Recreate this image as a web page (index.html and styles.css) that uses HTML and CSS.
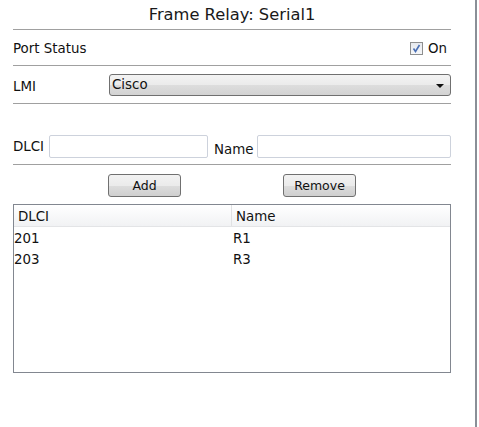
FILE: index.html
```html
<!DOCTYPE html>
<html>
<head>
<meta charset="utf-8">
<link rel="stylesheet" href="styles.css">
</head>
<body>
<div class="panel">
  <div class="title">Frame Relay: Serial1</div>
  <div class="row status-row">
    <span class="label">Port Status</span>
    <span class="check-wrap">
      <span class="checkbox"><svg width="11" height="11" viewBox="0 0 11 11"><path d="M2.5 5.5 L4.5 8.5 L8.5 2" fill="none" stroke="#4a6fb5" stroke-width="1.6"/></svg></span>
      <span class="on">On</span>
    </span>
  </div>
  <div class="row lmi-row">
    <span class="label lmi-label">LMI</span>
    <div class="select"><span>Cisco</span><span class="arrow"></span></div>
  </div>
  <div class="inputs-row">
    <span class="label dlci-label">DLCI</span>
    <span class="input dlci-input"></span>
    <span class="label name-label">Name</span>
    <span class="input name-input"></span>
  </div>
  <div class="buttons">
    <span class="btn">Add</span>
    <span class="btn">Remove</span>
  </div>
  <div class="table">
    <div class="thead">
      <div class="th c1">DLCI</div>
      <div class="th c2">Name</div>
    </div>
    <div class="tr"><div class="td c1">201</div><div class="td c2">R1</div></div>
    <div class="tr"><div class="td c1">203</div><div class="td c2">R3</div></div>
  </div>
</div>
</body>
</html>
```
FILE: styles.css
```css
* { box-sizing: border-box; }
html, body { margin: 0; padding: 0; background: #fff; }
body {
  font-family: "DejaVu Sans", Verdana, sans-serif;
  font-size: 13.4px;
  color: #111;
}
.panel {
  width: 477px;
  height: 427px;
  border-right: 2px solid #8a8f97;
  padding: 0 24px 0 13px;
}
.title {
  height: 30px;
  line-height: 29px;
  font-size: 16.3px;
  text-align: center;
  border-bottom: 1px solid #a0a0a0;
  color: #1a1a1a;
}
.row {
  display: flex;
  align-items: center;
  border-bottom: 1px solid #a0a0a0;
}
.status-row {
  height: 36px;
  justify-content: space-between;
}
.label { line-height: 15px; }
.status-row .label { padding-top: 2px; }
.check-wrap {
  display: flex;
  align-items: center;
  gap: 5px;
  padding-right: 4px;
  padding-top: 1px;
}
.checkbox {
  width: 13px;
  height: 13px;
  border: 1px solid #8e8f8f;
  background: linear-gradient(#e6e9ee, #f6f7f9);
  display: flex;
  align-items: center;
  justify-content: center;
}
.checkbox svg { display: block; }
.lmi-row { height: 38px; }
.lmi-label { width: 96px; padding-top: 3px; }
.select {
  flex: 1;
  height: 22px;
  border: 1px solid #707070;
  border-radius: 3px;
  background: linear-gradient(#f3f3f3 0%, #ebebeb 50%, #dddddd 51%, #d3d3d3 100%);
  display: flex;
  align-items: center;
  justify-content: space-between;
  padding: 0 6px 0 2px;
}
.arrow {
  width: 0;
  height: 0;
  border-left: 4px solid transparent;
  border-right: 4px solid transparent;
  border-top: 4px solid #111;
  margin-top: 2px;
}
.inputs-row {
  display: flex;
  align-items: center;
  padding: 31px 0 6px;
  border-bottom: 1px solid #a0a0a0;
}
.input {
  height: 23px;
  border: 1px solid #cdd2dc;
  border-radius: 2px;
  background: #fff;
}
.dlci-label { margin-right: 5px; }
.dlci-input { width: 159px; }
.name-label { margin: 0 3px 1px 6px; align-self: flex-end; }
.name-input { flex: 1; }
.buttons {
  display: flex;
  gap: 102px;
  padding-left: 95px;
  margin-top: 9px;
}
.btn {
  width: 73px;
  height: 23px;
  border: 1px solid #707070;
  border-radius: 3px;
  background: linear-gradient(#f2f2f2 0%, #ebebeb 50%, #dddddd 51%, #cfcfcf 100%);
  display: flex;
  align-items: center;
  justify-content: center;
  font-size: 12.5px;
  color: #111;
}
.table {
  margin-top: 7px;
  height: 169px;
  border: 1px solid #828790;
}
.thead {
  display: flex;
  height: 22px;
  background: linear-gradient(#ffffff, #f1f2f4);
  border-bottom: 1px solid #e3e4e6;
}
.th {
  line-height: 23px;
  padding-left: 4px;
}
.thead .c1 { width: 218px; border-right: 1px solid #e0e1e3; }
.tr {
  display: flex;
  height: 21px;
  line-height: 24px;
}
.td.c1 { width: 219px; }
```
